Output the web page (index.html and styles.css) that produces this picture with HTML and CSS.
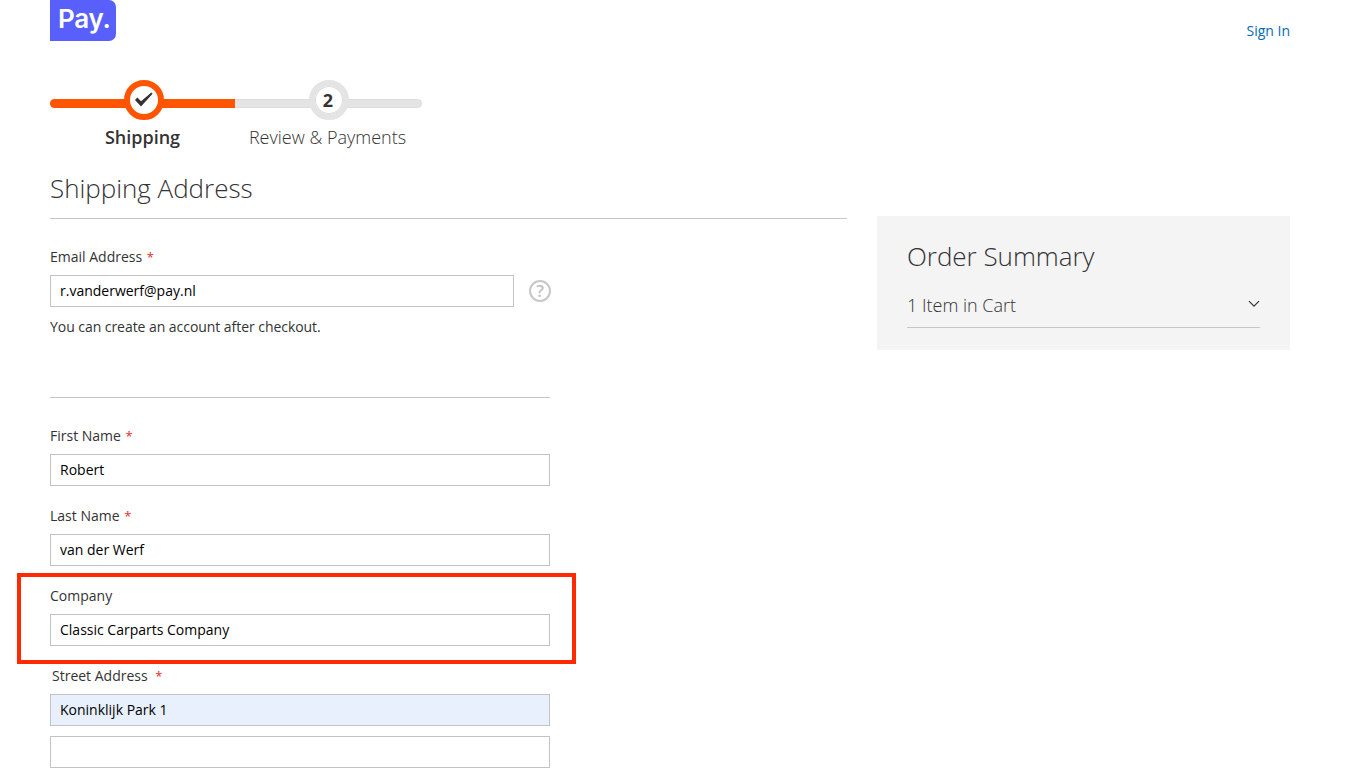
FILE: index.html
```html
<!DOCTYPE html>
<html lang="en">
<head>
<meta charset="utf-8">
<title>Checkout</title>
<link rel="stylesheet" href="styles.css">
</head>
<body>
<div class="page">
  <header class="header">
    <div class="logo">Pay.</div>
    <a class="signin" href="#">Sign In</a>
  </header>

  <div class="progress">
    <div class="step step-one">
      <span class="bubble bubble-done">
        <svg width="20" height="16" viewBox="0 0 20 16"><path d="M1 8 L3.4 5.6 L7 9.2 L17.4 0.6 L18.6 1.7 L7 14.6 Z" fill="#333"/></svg>
      </span>
      <span class="step-label step-label-active">Shipping</span>
    </div>
    <div class="step step-two">
      <span class="bubble bubble-todo">2</span>
      <span class="step-label">Review &amp; Payments</span>
    </div>
  </div>

  <div class="columns">
    <main class="main">
      <h1 class="title">Shipping Address</h1>
      <div class="field field-email">
        <label class="label">Email Address <span class="req">*</span></label>
        <div class="email-row">
          <input class="input input-email" type="text" value="r.vanderwerf@pay.nl">
          <svg class="help" width="22" height="22" viewBox="0 0 22 22">
            <circle cx="11" cy="11" r="10" fill="none" stroke="#c7c7c7" stroke-width="2"/>
            <text x="11" y="17" text-anchor="middle" class="help-mark">?</text>
          </svg>
        </div>
        <p class="note">You can create an account after checkout.</p>
      </div>
      <hr class="rule">
      <div class="field">
        <label class="label">First Name <span class="req">*</span></label>
        <input class="input" type="text" value="Robert">
      </div>
      <div class="field">
        <label class="label">Last Name <span class="req">*</span></label>
        <input class="input" type="text" value="van der Werf">
      </div>
      <div class="field field-boxed">
        <label class="label">Company</label>
        <input class="input" type="text" value="Classic Carparts Company">
      </div>
      <div class="field">
        <label class="label label-street">Street Address <span class="req req-street">*</span></label>
        <input class="input input-filled" type="text" value="Koninklijk Park 1">
        <input class="input input-second" type="text" value="">
      </div>
    </main>

    <aside class="summary">
      <h2 class="summary-title">Order Summary</h2>
      <div class="summary-row">
        <span>1 Item in Cart</span>
        <svg width="12" height="8" viewBox="0 0 12 8"><path d="M1 1.2 L6 6.2 L11 1.2" fill="none" stroke="#333" stroke-width="1.2"/></svg>
      </div>
    </aside>
  </div>
</div>
</body>
</html>
```

FILE: styles.css
```css
* , *::before, *::after { box-sizing: border-box; }
html, body { margin: 0; padding: 0; background: #fff; }
body {
  font-family: "Open Sans", "Noto Sans", sans-serif;
  font-size: 14px;
  color: #333;
  overflow: hidden;
  height: 784px;
}
.page { padding: 0 57px 0 50px; }

.header { display: flex; justify-content: space-between; align-items: flex-start; height: 41px; }
.logo {
  width: 66px;
  height: 41px;
  background: #585ffb;
  border-radius: 0 7px 7px 0;
  color: #fff;
  font-family: "Inter", sans-serif;
  font-weight: 600;
  font-size: 26px;
  line-height: 37px;
  letter-spacing: -0.3px;
  padding-left: 8px;
}
.signin { color: #006bb4; text-decoration: none; font-size: 14px; line-height: 20px; margin-top: 21px; }

.progress {
  position: relative;
  display: flex;
  width: 372px;
  margin-top: 39px;
  height: 71px;
}
.progress::before {
  content: "";
  position: absolute;
  left: 0;
  right: 0;
  top: 19px;
  height: 9px;
  background: #e4e4e4;
  border: 1px solid #dcdcdc;
  border-radius: 5px;
}
.step { position: relative; display: flex; flex-direction: column; align-items: center; width: 185px; }
.step-one::before {
  content: "";
  position: absolute;
  left: 0;
  right: 0;
  top: 19px;
  height: 9px;
  background: #ff5501;
  border-radius: 5px 0 0 5px;
}
.step-two { width: 187px; }
.bubble {
  position: relative;
  display: flex;
  align-items: center;
  justify-content: center;
  width: 40px;
  height: 40px;
  border-radius: 50%;
  background: #fff;
  font-weight: 700;
  font-size: 18px;
  color: #333;
}
.bubble-done { border: 6px solid #ff5501; margin-left: 3px; }
.bubble-todo { border: 6px solid #e4e4e4; margin-left: 1px; padding: 0 2px 1px 0; box-shadow: 0 0 0 1px #dcdcdc inset; }
.step-label { position: relative; font-size: 18px; font-weight: 300; line-height: 24px; margin-top: 5px; white-space: nowrap; color: #333; }
.step-label-active { font-weight: 600; margin-left: 0; }
.step-two .step-label { margin-left: -2px; }

.columns { display: flex; justify-content: space-between; align-items: flex-start; }
.main { width: 797px; }
.title {
  margin: 17px 0 0;
  font-size: 26px;
  font-weight: 300;
  line-height: 36px;
  height: 51px;
  border-bottom: 1px solid #c6c6c6;
  padding-top: 2px;
  letter-spacing: -0.03px;
}
.field { width: 500px; height: 80px; }
.field-email { height: auto; margin-top: 28px; }
.label { display: block; font-size: 14px; line-height: 20px; margin-bottom: 8px; color: #333; }
.req { color: #e02b27; margin-left: 1px; font-size: 13px; }
.req-street { margin-left: 4px; }
.label-street { margin-left: 2px; }
.input {
  display: block;
  width: 500px;
  height: 32px;
  border: 1px solid #c2c2c2;
  background: #fff;
  padding: 0 9px 2px;
  font-family: inherit;
  font-size: 14px;
  color: #000;
  border-radius: 0;
  outline: none;
}
.input-email { flex: none; width: 464px; }
.input-filled { background: #e8f0fe; }
.input-second { margin-top: 10px; }
.email-row { display: flex; align-items: center; gap: 15px; }
.help { flex: none; }
.help-mark { font-family: "Open Sans", sans-serif; font-size: 17px; font-weight: 600; fill: #c2c2c2; }
.note { margin: 10px 0 0; line-height: 20px; letter-spacing: -0.05px; }
.rule { width: 500px; margin: 60px 0 28px; border: 0; border-top: 1px solid #c6c6c6; }
.field-boxed { position: relative; }
.field-boxed::before {
  content: "";
  position: absolute;
  left: -33px;
  top: -13px;
  width: 559px;
  height: 91px;
  border: 4px solid #ff2a00;
  pointer-events: none;
}

.summary {
  width: 413px;
  height: 134px;
  margin-top: 65px;
  background: #f4f4f4;
  padding: 22px 30px 0;
}
.summary-title { margin: 0; font-size: 26px; font-weight: 300; line-height: 36px; letter-spacing: -0.03px; }
.summary-row {
  display: flex;
  justify-content: space-between;
  align-items: center;
  height: 54px;
  padding: 9px 0 0;
  border-bottom: 1px solid #c6c6c6;
  font-size: 18px;
  font-weight: 300;
}
.summary-row svg { margin-top: -2px; }
```
